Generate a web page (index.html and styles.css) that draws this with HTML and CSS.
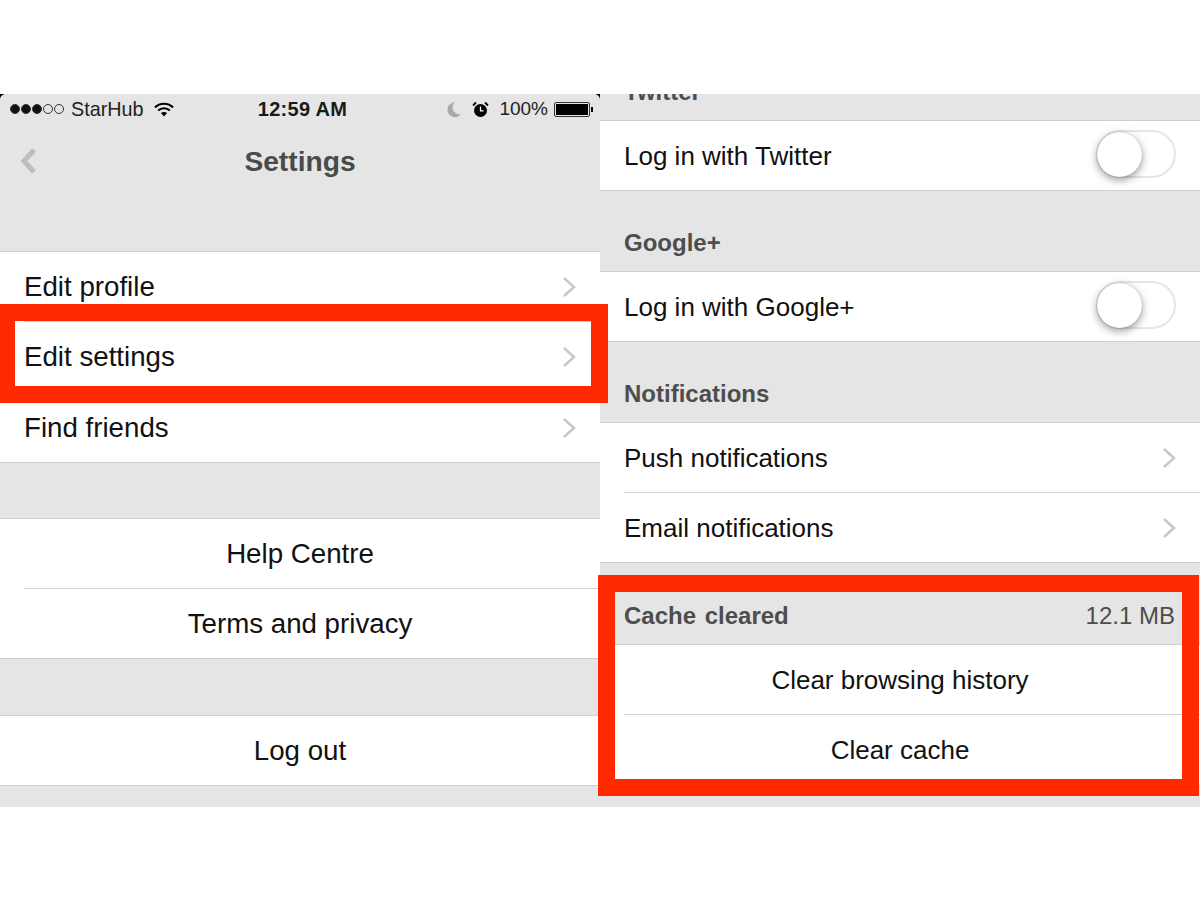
FILE: index.html
```html
<!DOCTYPE html>
<html lang="en">
<head>
<meta charset="utf-8">
<title>Settings</title>
<link rel="stylesheet" href="styles.css">
</head>
<body>
<main class="shots">
  <section class="panel panel-left">
    <svg class="corner" width="6" height="6" viewBox="0 0 6 6"><path d="M0 0h6C2.500 0 0 2.500 0 6z"/></svg>
    <header class="top">
      <div class="status">
        <div class="status-left">
          <span class="signal"><i class="dot on"></i><i class="dot on"></i><i class="dot on"></i><i class="dot"></i><i class="dot"></i></span>
          <span>StarHub</span>
          <svg class="wifi" width="20" height="15" viewBox="0 0 20 15"><path d="M1 5.400C6 .500 14 .500 19 5.400" fill="none" stroke="#000" stroke-width="2.200"/><path d="M4.200 8.500c3.200-3 8.400-3 11.600 0" fill="none" stroke="#000" stroke-width="2.200"/><path d="M6.900 11c1.800-1.500 4.400-1.500 6.200 0L10 14.500z"/></svg>
        </div>
        <div class="status-time">12:59 AM</div>
        <div class="status-right">
          <svg width="16" height="17" viewBox="0 0 16 17"><path d="M9 1C5 1.500 1.500 4.500 1.500 8.800 1.500 13 5 16.200 9 16.200c2.500 0 4.700-1.200 6-3.200-4 1-8.500-2-8.500-6.200C6.500 4.800 7.500 2.500 9 1z" fill="#aaa"/></svg>
          <svg class="clock" width="17" height="17" viewBox="0 0 17 17"><circle cx="8.500" cy="9.500" r="6.500"/><path d="M8.500 5.500v4.300h3" fill="none" stroke="#fff" stroke-width="1.300"/><path d="M1 4.500 4 1.500M16 4.500 13 1.500" stroke="#000" stroke-width="1.800"/></svg>
          <span class="pct">100%</span>
          <span class="battery"><i class="cell"></i></span><i class="nub"></i>
        </div>
      </div>
      <div class="nav">
        <svg class="back" width="18" height="28" viewBox="0 0 18 28"><path d="M15 3 5 14l10 11" fill="none" stroke="#bdbdbd" stroke-width="5"/></svg>
        <h1>Settings</h1>
      </div>
    </header>
    <ul class="group stretched">
      <li class="row inset link">Edit profile<svg class="chev" width="14" height="22" viewBox="0 0 14 22"><path d="M2 2l10 9-10 9" fill="none" stroke="#c7c7cc" stroke-width="2.500"/></svg></li>
      <li class="row inset link">Edit settings<svg class="chev" width="14" height="22" viewBox="0 0 14 22"><path d="M2 2l10 9-10 9" fill="none" stroke="#c7c7cc" stroke-width="2.500"/></svg></li>
      <li class="row last link">Find friends<svg class="chev" width="14" height="22" viewBox="0 0 14 22"><path d="M2 2l10 9-10 9" fill="none" stroke="#c7c7cc" stroke-width="2.500"/></svg></li>
    </ul>
    <div class="gap"></div>
    <ul class="group">
      <li class="row inset center">Help Centre</li>
      <li class="row last center">Terms and privacy</li>
    </ul>
    <div class="gap gap-wide"></div>
    <ul class="group">
      <li class="row last center">Log out</li>
    </ul>
    <div class="frame frame-left"></div>
  </section>

  <section class="panel">
    <svg class="corner" width="6" height="6" viewBox="0 0 6 6"><path d="M0 0h6C2.500 0 0 2.500 0 6z"/></svg>
    <h2 class="heading clipped"><span>Twitter</span></h2>
    <ul class="group">
      <li class="row last link">Log in with Twitter<span class="toggle"><i class="knob"></i></span></li>
    </ul>
    <h2 class="heading"><span>Google+</span></h2>
    <ul class="group">
      <li class="row last link">Log in with Google+<span class="toggle"><i class="knob"></i></span></li>
    </ul>
    <h2 class="heading"><span>Notifications</span></h2>
    <ul class="group">
      <li class="row inset link">Push notifications<svg class="chev" width="14" height="22" viewBox="0 0 14 22"><path d="M2 2l10 9-10 9" fill="none" stroke="#c7c7cc" stroke-width="2.500"/></svg></li>
      <li class="row last link">Email notifications<svg class="chev" width="14" height="22" viewBox="0 0 14 22"><path d="M2 2l10 9-10 9" fill="none" stroke="#c7c7cc" stroke-width="2.500"/></svg></li>
    </ul>
    <h2 class="heading heading-tall"><span class="spaced">Cache cleared</span><span class="size">12.1 MB</span></h2>
    <ul class="group">
      <li class="row inset center">Clear browsing history</li>
      <li class="row last center">Clear cache</li>
    </ul>
    <div class="frame frame-right"></div>
  </section>
</main>
</body>
</html>
```

FILE: styles.css
```css
* { box-sizing: border-box; }
html, body { margin: 0; height: 900px; background: #fff; overflow: hidden; }
body { font-family: "Liberation Sans", Arial, sans-serif; color: #111; padding-top: 94px; }
ul { list-style: none; margin: 0; padding: 0; }
h1, h2 { margin: 0; }

.shots { display: grid; grid-template-columns: 600px 600px; height: 713px; }
.panel { position: relative; background: #e5e5e5; height: 713px; }
.corner { position: absolute; left: 0; top: 0; }
.panel + .panel .corner { left: -6px; transform: scaleX(-1); }

.top { height: 158px; border-bottom: 1px solid #cfcfd2; }
.status { display: grid; grid-template-columns: 1fr auto 1fr; align-items: center; height: 30px; font-size: 19.800px; color: #222; }
.status-left { display: flex; align-items: center; padding-left: 10px; gap: 7px; }
.signal { display: flex; gap: 1px; }
.dot { width: 10px; height: 10px; border-radius: 50%; border: 1px solid #333; }
.dot.on { background: #111; }
.wifi { margin-left: 3px; }
.status-time { font-weight: 700; font-size: 20px; letter-spacing: .3px; padding-left: 5px; color: #1a1a1a; }
.status-right { display: flex; align-items: center; justify-content: flex-end; gap: 10px; padding-right: 7px; }
.pct { font-size: 19px; }
.battery { display: block; width: 36px; height: 15px; border: 1px solid #333; padding: 1px; margin-left: -4px; border-radius: 2px; }
.cell { display: block; height: 100%; background: #000; }
.nub { display: block; width: 2px; height: 5px; background: #000; margin-left: -9px; }

.nav { position: relative; display: flex; justify-content: center; align-items: center; height: 44px; margin-top: 15px; }
.nav h1 { font-size: 28.200px; font-weight: 700; color: #4a4a4a; }
.back { position: absolute; left: 19px; top: 8px; }

.group { background: #fff; }
.row { position: relative; display: flex; align-items: center; height: 70px; padding: 0 24px; font-size: 26px; color: #111; }
.panel-left .row { font-size: 27.700px; }
.stretched .row { height: 70.340px; }
.row::after { content: ""; position: absolute; right: 0; bottom: 0; height: 1px; }
.row.inset::after { left: 24px; background: #d4d4d6; }
.row.last::after { left: 0; background: #cfcfd2; }
.row.center { justify-content: center; }
.row.link { justify-content: space-between; }

.gap { height: 56px; border-bottom: 1px solid #cfcfd2; }
.gap-wide { height: 57px; }

.heading { display: flex; justify-content: space-between; align-items: flex-end; height: 81px; padding: 0 25px 14px 24px; font-size: 24px; font-weight: 700; color: #4d4d4d; border-bottom: 1px solid #cfcfd2; }
.heading-tall { height: 82px; }
.heading.clipped { height: 27px; overflow: hidden; }
.spaced { word-spacing: 2px; }
.size { font-weight: 400; }

.toggle { position: relative; display: block; width: 80px; height: 48px; margin-top: -5px; border-radius: 24px; border: 2px solid #e6e6e6; }
.knob { position: absolute; left: -1px; top: 0; width: 45px; height: 45px; border-radius: 50%; background: #fff; box-shadow: 0 3px 8px rgba(0,0,0,.4), 0 0 1px rgba(0,0,0,.3); }

.frame { position: absolute; z-index: 2; border: 17px solid #ff2a00; pointer-events: none; }
.frame-left { left: -2px; top: 210px; width: 610px; height: 99px; }
.frame-right { left: -2px; top: 481px; width: 601px; height: 221px; }
```
